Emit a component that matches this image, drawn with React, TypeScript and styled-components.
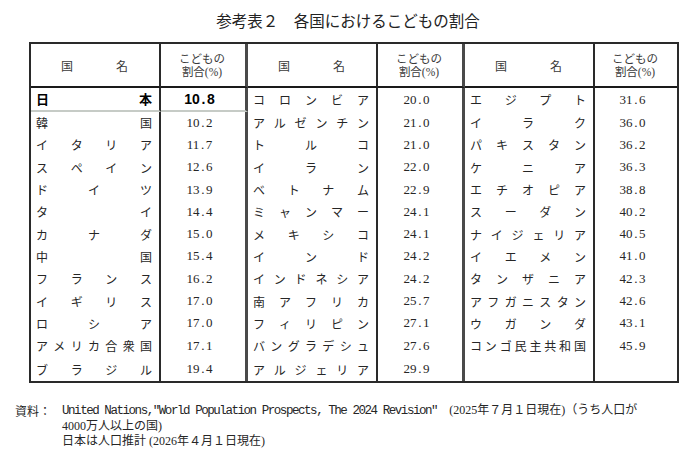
import React from 'react';
import styled, { createGlobalStyle } from 'styled-components';

type Entry = { name: string; value: string } | null;

const e = (name: string, value: string): Entry => ({ name, value });

const groups: Entry[][] = [
  [
    e('日本', '10.8'),
    e('韓国', '10.2'),
    e('イタリア', '11.7'),
    e('スペイン', '12.6'),
    e('ドイツ', '13.9'),
    e('タイ', '14.4'),
    e('カナダ', '15.0'),
    e('中国', '15.4'),
    e('フランス', '16.2'),
    e('イギリス', '17.0'),
    e('ロシア', '17.0'),
    e('アメリカ合衆国', '17.1'),
    e('ブラジル', '19.4'),
  ],
  [
    e('コロンビア', '20.0'),
    e('アルゼンチン', '21.0'),
    e('トルコ', '21.0'),
    e('イラン', '22.0'),
    e('ベトナム', '22.9'),
    e('ミャンマー', '24.1'),
    e('メキシコ', '24.1'),
    e('インド', '24.2'),
    e('インドネシア', '24.2'),
    e('南アフリカ', '25.7'),
    e('フィリピン', '27.1'),
    e('バングラデシュ', '27.6'),
    e('アルジェリア', '29.9'),
  ],
  [
    e('エジプト', '31.6'),
    e('イラク', '36.0'),
    e('パキスタン', '36.2'),
    e('ケニア', '36.3'),
    e('エチオピア', '38.8'),
    e('スーダン', '40.2'),
    e('ナイジェリア', '40.5'),
    e('イエメン', '41.0'),
    e('タンザニア', '42.3'),
    e('アフガニスタン', '42.6'),
    e('ウガンダ', '43.1'),
    e('コンゴ民主共和国', '45.9'),
    null,
  ],
];

const GlobalStyle = createGlobalStyle`
  html, body {
    margin: 0;
    padding: 0;
    background: #ffffff;
  }
  body {
    font-family: "Liberation Serif", "Noto Sans CJK JP", serif;
    color: #1e1e1e;
  }
`;

const Page = styled.main`
  width: 700px;
  height: 472px;
  box-sizing: border-box;
  padding-top: 10px;
  overflow: hidden;
`;

const Title = styled.h1`
  margin: 0 0 12px;
  padding-right: 4px;
  font-family: "Noto Sans CJK JP", sans-serif;
  font-size: 15.5px;
  font-weight: 400;
  line-height: 20px;
  text-align: center;
  color: #222;
`;

const Table = styled.div`
  margin-left: 29px;
  width: 650px;
  box-sizing: border-box;
  border: 2px solid #2a2a2a;
  display: grid;
  grid-template-columns: 130px 87px 130px 87px 130px 82px;
  grid-template-rows: 44px 23.5px repeat(11, 22.3px) 24.5px;
`;

type Edge = 'thin' | 'thick' | 'none';

const edgeBorder = (edge: Edge) =>
  edge === 'thin'
    ? 'border-right: 2px solid #2a2a2a;'
    : edge === 'thick'
    ? 'border-right: 3px solid #4a4a4a;'
    : '';

const HeaderCell = styled.div<{ $edge: Edge }>`
  box-sizing: border-box;
  ${(p) => edgeBorder(p.$edge)}
  border-bottom: 2px solid #1a1a1a;
  display: flex;
  align-items: center;
  justify-content: center;
  font-family: "Noto Sans CJK JP", sans-serif;
  font-size: 12px;
  color: #3a3a3a;
`;

const NameHead = styled.div`
  display: flex;
  gap: 43px;
  padding-right: 1px;
`;

const RatioHead = styled.div`
  padding: 2px 2px 0 0;
  font-family: "Liberation Serif", "Noto Sans CJK JP", serif;
  font-size: 11.5px;
  line-height: 13.3px;
  text-align: center;
`;

const NameCell = styled.div<{ $edge: Edge; $rule: boolean; $bold: boolean }>`
  box-sizing: border-box;
  ${(p) => edgeBorder(p.$edge)}
  ${(p) => (p.$rule ? 'border-bottom: 2px solid #c6cbc6;' : '')}
  display: flex;
  align-items: center;
  justify-content: space-between;
  padding: 0 7px 0 5px;
  font-family: "Noto Sans CJK JP", sans-serif;
  font-size: ${(p) => (p.$bold ? '13px' : '12px')};
  font-weight: ${(p) => (p.$bold ? 700 : 400)};
  color: ${(p) => (p.$bold ? '#000' : '#262626')};
`;

const ValueCell = styled.div<{ $edge: Edge; $rule: boolean; $bold: boolean }>`
  box-sizing: border-box;
  ${(p) => edgeBorder(p.$edge)}
  ${(p) => (p.$rule ? 'border-bottom: 2px solid #c6cbc6;' : '')}
  display: flex;
  align-items: center;
  justify-content: center;
  padding-right: 7px;
  font-family: ${(p) =>
    p.$bold ? '"Liberation Sans", sans-serif' : '"Liberation Serif", serif'};
  font-size: ${(p) => (p.$bold ? '14px' : '13px')};
  font-weight: ${(p) => (p.$bold ? 700 : 400)};
  color: ${(p) => (p.$bold ? '#000' : '#262626')};
`;

const Dot = styled.span`
  display: inline-block;
  width: 0.5em;
  text-align: center;
`;

const Footnote = styled.div`
  display: flex;
  margin-top: 20px;
  padding-left: 15px;
  font-size: 12px;
  line-height: 15px;
  color: #262626;
`;

const NoteLabel = styled.div`
  width: 47px;
  flex: none;
  font-family: "Noto Sans CJK JP", sans-serif;
`;

const NoteBody = styled.div`
  display: flex;
  flex-direction: column;
`;

const NoteLine = styled.div`
  white-space: pre;
`;

const Mono = styled.span`
  font-family: "Liberation Mono", monospace;
  font-size: 12.5px;
  letter-spacing: -1.45px;
`;

const Num = ({ v }: { v: string }) => {
  const [a, b] = v.split('.');
  return (
    <>
      {a}
      <Dot>.</Dot>
      {b}
    </>
  );
};

const edges: Edge[] = ['thin', 'thick', 'thin', 'thick', 'thin', 'none'];

export default function App() {
  const rowCount = groups[0].length;
  const cells: React.ReactNode[] = [];

  groups.forEach((_, g) => {
    cells.push(
      <HeaderCell key={`hn${g}`} $edge={edges[g * 2]}>
        <NameHead>
          <span>国</span>
          <span>名</span>
        </NameHead>
      </HeaderCell>,
      <HeaderCell key={`hv${g}`} $edge={edges[g * 2 + 1]}>
        <RatioHead>
          こどもの
          <br />
          割合(%)
        </RatioHead>
      </HeaderCell>
    );
  });

  for (let r = 0; r < rowCount; r++) {
    groups.forEach((group, g) => {
      const entry = group[r];
      const bold = r === 0 && g === 0;
      const rule = r === 0 && g === 0;
      cells.push(
        <NameCell key={`n${r}-${g}`} $edge={edges[g * 2]} $rule={rule} $bold={bold}>
          {entry && Array.from(entry.name).map((ch, i) => <span key={i}>{ch}</span>)}
        </NameCell>,
        <ValueCell key={`v${r}-${g}`} $edge={edges[g * 2 + 1]} $rule={rule} $bold={bold}>
          {entry && <Num v={entry.value} />}
        </ValueCell>
      );
    });
  }

  return (
    <>
      <GlobalStyle />
      <Page>
        <Title>参考表２　各国におけるこどもの割合</Title>
        <Table>{cells}</Table>
        <Footnote>
          <NoteLabel>資料：</NoteLabel>
          <NoteBody>
            <NoteLine>
              <Mono>United Nations,"World Population Prospects, The 2024 Revision"</Mono>
              {'　(2025年７月１日現在)（うち人口が'}
            </NoteLine>
            <NoteLine>4000万人以上の国)</NoteLine>
            <NoteLine>日本は人口推計 (2026年４月１日現在)</NoteLine>
          </NoteBody>
        </Footnote>
      </Page>
    </>
  );
}
